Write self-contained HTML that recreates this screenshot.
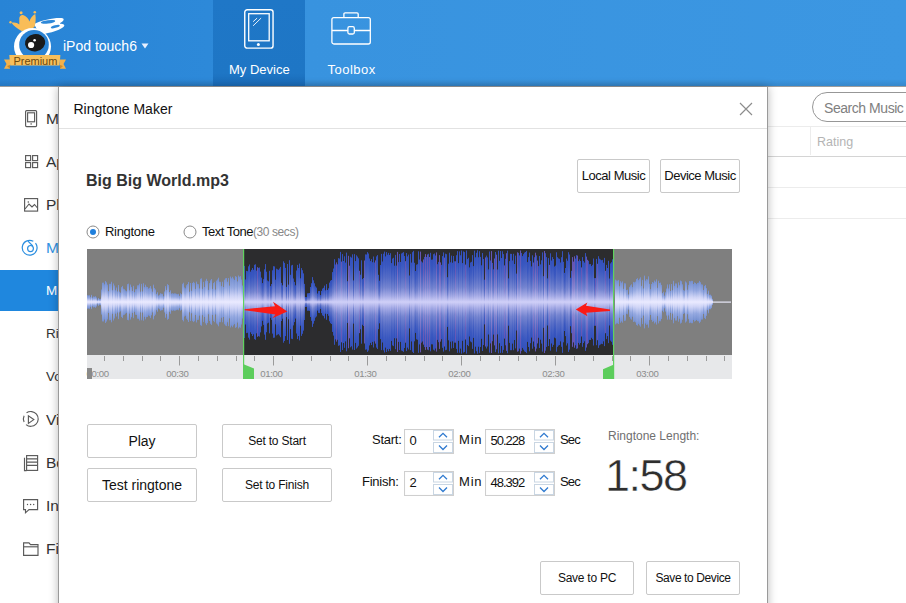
<!DOCTYPE html>
<html><head><meta charset="utf-8">
<style>
*{margin:0;padding:0;box-sizing:border-box}
html,body{width:906px;height:603px;overflow:hidden;background:#fff;font-family:"Liberation Sans",sans-serif;color:#222}
.a{position:absolute;white-space:nowrap}
#hdr{position:absolute;left:0;top:0;width:906px;height:87px;background:linear-gradient(to right,#2884d6 0%,#2d89d9 23%,#3893df 34%,#3c97e2 100%);border-bottom:1px solid #9c9c9c}
#hdr .shade{position:absolute;left:0;bottom:0;width:906px;height:7px;background:linear-gradient(to bottom,rgba(0,0,0,0),rgba(0,0,0,0.1))}
#tab{position:absolute;left:213px;top:0;width:92px;height:86px;background:linear-gradient(to bottom,#1f77c7 0%,#1e76c5 85%,#1a6bb8 100%)}
.wt{color:#fff}
.side{position:absolute;left:0;top:87px;width:70px;height:516px;background:#fff}
.sel{position:absolute;left:0;top:270px;width:70px;height:41px;background:#1f87de}
.st{position:absolute;left:46px;font-size:15.5px;color:#333}
.btn{position:absolute;border:1px solid #c9c9c9;border-radius:2px;background:#fff;font-size:13px;color:#111;text-align:center}
.lbl{position:absolute;font-size:13px;color:#111;white-space:nowrap}
.inp{position:absolute;border:1px solid #cfcfcf;background:#fff;font-size:13px;color:#111;box-shadow:inset 0 0 1px rgba(0,0,0,0.08)}
.spin{position:absolute;right:1px;top:1px;width:20px;bottom:1px}
</style></head><body>
<!-- header -->
<div id="hdr"><div class="shade"></div></div>
<div id="tab"></div>
<!-- logo -->
<svg class="a" style="left:0;top:0" width="80" height="80" viewBox="0 0 80 80">
  <path d="M34 24 C42 20 54 17.5 61.5 18 C64.5 18.3 64.5 20.5 61 22.5 C59.5 23.3 59.5 23.8 61 23.8 C65 24 65.5 26 62 28 C58 30.5 53 32 48 33 L40 35 Z" fill="#fff"/>
  <ellipse cx="48" cy="21.9" rx="7.3" ry="1.7" transform="rotate(-7 48 21.9)" fill="#2e88d8"/>
  <ellipse cx="55.3" cy="26.6" rx="4.6" ry="1.3" transform="rotate(-14 55.3 26.6)" fill="#2e88d8"/>
  <path d="M11.5 22.8 C14 22 17.5 22.5 19.3 24.5 L19.3 18 C19.8 15.5 21.5 14.5 23 15 C26 16 28.5 18.5 29.4 21.5 C30.5 18 32.5 15.5 35.3 14 C36 18 35.8 23 34.5 27 C31 29.5 26 31 21.5 31 C17 28.5 13.5 26 11.5 22.8 Z" fill="#f9bd58"/>
  <circle cx="21.1" cy="12.8" r="1.5" fill="#f9bd58"/><circle cx="34.8" cy="12.3" r="1.3" fill="#f9bd58"/><circle cx="10.5" cy="22.2" r="1.2" fill="#f9bd58"/>
  <circle cx="32.5" cy="46.5" r="18.5" fill="#fff"/>
  <circle cx="34" cy="44.8" r="14.8" fill="#2a82d2"/>
  <ellipse cx="35.1" cy="42.7" rx="10.2" ry="8.7" transform="rotate(-10 35.1 42.7)" fill="#1a1a1a"/>
  <circle cx="31.1" cy="45" r="3.1" fill="#fff"/><circle cx="34.6" cy="40.2" r="1.3" fill="#fff"/>
  <path d="M4 59.5 L10 59.5 L10 68.8 L4 68.8 L6.5 64 Z" fill="#f3b14b"/>
  <path d="M66 59.5 L60 59.5 L60 68.8 L66 68.8 L63.5 64 Z" fill="#f3b14b"/>
  <path d="M7 66 L10 68.8 L10 65 Z M63 66 L60 68.8 L60 65 Z" fill="#c98a2c"/>
  <path d="M9.3 55 L60.4 55 L59.5 65.5 L10.2 65.5 Z" fill="#f7bf5c"/>
  <text x="35.4" y="64.8" font-family="Liberation Sans" font-size="10" fill="#6e4a10" text-anchor="middle" textLength="44" lengthAdjust="spacingAndGlyphs">Premium</text>
</svg>
<div class="a wt" style="left:63px;top:37.5px;font-size:14px">iPod touch6</div>
<svg class="a" style="left:141px;top:43px" width="8" height="6"><path d="M0.5 0.5 L7.5 0.5 L4 5.5 Z" fill="#e8f0ff"/></svg>
<!-- my device icon -->
<svg class="a" style="left:243px;top:8px" width="32" height="42" viewBox="0 0 32 42">
  <rect x="1.75" y="1.75" width="28.3" height="38.4" rx="2.5" fill="none" stroke="#fff" stroke-width="1.4"/>
  <rect x="5.7" y="5.7" width="20.5" height="27.1" fill="none" stroke="#fff" stroke-width="1.3"/>
  <circle cx="15.4" cy="36.4" r="1.5" fill="#fff"/>
  <path d="M10.1 13.7 L14.1 10.1 M10.1 17.8 L18.1 10.1" stroke="#fff" stroke-width="0.9"/>
</svg>
<div class="a wt" style="left:229px;top:62px;font-size:13px">My Device</div>
<!-- toolbox icon -->
<svg class="a" style="left:330px;top:11px" width="42" height="34" viewBox="0 0 42 34">
  <rect x="1.9" y="6.6" width="38.4" height="26.4" rx="2" fill="none" stroke="#fff" stroke-width="1.3"/>
  <path d="M13.9 6.6 V3 Q13.9 1.8 15.1 1.8 H27 Q28.2 1.8 28.2 3 V6.6" fill="none" stroke="#fff" stroke-width="1.3"/>
  <path d="M1.9 19.5 H17.9 M24.3 19.5 H40.3" stroke="#fff" stroke-width="1.3"/>
  <rect x="17.9" y="15.7" width="6.4" height="7.3" rx="1.5" fill="none" stroke="#fff" stroke-width="1.3"/>
</svg>
<div class="a wt" style="left:327.5px;top:62px;font-size:13px;letter-spacing:0.5px">Toolbox</div>

<!-- sidebar -->
<div class="sel"></div>
<svg class="a" style="left:0;top:100px" width="46" height="470" viewBox="0 100 46 470" fill="none" stroke="#5a5a5a" stroke-width="1.15">
  <!-- phone -->
  <rect x="25.6" y="110.6" width="11" height="16" rx="1"/>
  <rect x="27.6" y="112.8" width="7" height="9"/>
  <rect x="30.5" y="123.3" width="1.3" height="1.3" fill="#555" stroke="none"/>
  <!-- apps -->
  <rect x="25.6" y="155.6" width="5" height="5"/><rect x="32.6" y="155.6" width="5" height="5"/>
  <rect x="25.6" y="162.6" width="5" height="5"/><rect x="32.6" y="162.6" width="5" height="5"/>
  <!-- photos -->
  <rect x="24.6" y="198.6" width="13" height="12.5"/>
  <path d="M25 209 L29 204 L32 207 L34.5 204.5 L37.5 208"/>
  <circle cx="28.3" cy="202" r="0.8" fill="#555" stroke="none"/>
  <!-- music (blue) -->
  <path d="M33.3 241.3 A7.4 7.4 0 1 0 35.5 243.2" stroke="#2b8ee0" stroke-width="1.2"/>
  <ellipse cx="30.5" cy="248.6" rx="2.9" ry="3.1" stroke="#2b8ee0" stroke-width="1.2"/>
  <path d="M28 241.2 L32.8 246" stroke="#2b8ee0" stroke-width="1.2"/>
  <!-- video -->
  <path d="M26.56 412.84 A7.4 7.4 0 1 1 26.04 424.57"/>
  <path d="M24.09 422.03 A7.4 7.4 0 0 1 24.09 415.77"/>
  <path d="M28.4 415.8 L28.4 423.4 L33.8 419.6 Z"/>
  <!-- books -->
  <rect x="26.6" y="455.6" width="11" height="14.8"/>
  <path d="M24.5 457.8 V470.6 H26.6"/>
  <path d="M27 458.8 H37 M27 462.1 H37 M27 465.4 H37"/>
  <!-- info/chat -->
  <path d="M23.6 499.6 H37.6 V509.6 H29 L25.5 512.8 V509.6 H23.6 Z"/>
  <circle cx="27.5" cy="504.5" r="0.7" fill="#555" stroke="none"/><circle cx="30.6" cy="504.5" r="0.7" fill="#555" stroke="none"/><circle cx="33.7" cy="504.5" r="0.7" fill="#555" stroke="none"/>
  <!-- folder -->
  <path d="M23.6 542.8 H29 L30.5 544.6 H38 V555.4 H23.6 Z"/>
  <path d="M23.6 546.8 H38"/>
</svg>
<div class="st" style="top:109.6px">M</div>
<div class="st" style="top:152.6px">Ap</div>
<div class="st" style="top:195.6px">Ph</div>
<div class="st" style="top:238.6px;color:#3293e4">M</div>
<div class="st" style="top:282.8px;color:#fff;font-size:13.5px">M</div>
<div class="st" style="top:325.6px;font-size:13.5px">Ri</div>
<div class="st" style="top:368.6px;font-size:13.5px">Vo</div>
<div class="st" style="top:410.6px">Vi</div>
<div class="st" style="top:453.6px">Bo</div>
<div class="st" style="top:496.6px">In</div>
<div class="st" style="top:539.6px">Fi</div>

<!-- right background -->
<div class="a" style="left:812px;top:92px;width:120px;height:30px;border:1px solid #979797;border-radius:15px"></div>
<div class="a" style="left:824px;top:100px;font-size:14px;color:#808080;letter-spacing:-0.45px">Search Music</div>
<div class="a" style="left:767px;top:126px;width:139px;height:1px;background:#ececec"></div>
<div class="a" style="left:810px;top:127px;width:1px;height:28px;background:#ececec"></div>
<div class="a" style="left:817px;top:134.5px;font-size:12.5px;color:#b4b4b4">Rating</div>
<div class="a" style="left:767px;top:156px;width:139px;height:1px;background:#d4d4d4"></div>
<div class="a" style="left:767px;top:187px;width:139px;height:1px;background:#ececec"></div>
<div class="a" style="left:767px;top:218px;width:139px;height:1px;background:#ececec"></div>

<!-- modal -->
<div class="a" style="left:58px;top:87px;width:710px;height:530px;background:#fff;border:1px solid #9a9a9a;border-top:none;box-shadow:0 0 9px rgba(0,0,0,0.28)"></div>
<div class="a" style="left:73.5px;top:101px;font-size:14px;color:#111">Ringtone Maker</div>
<svg class="a" style="left:737px;top:100px" width="18" height="18"><path d="M3 3 L15 15 M15 3 L3 15" stroke="#8c8c8c" stroke-width="1.15"/></svg>
<div class="a" style="left:59px;top:128px;width:708px;height:1px;background:#e2e2e2"></div>

<div class="a" style="left:86px;top:171.5px;font-size:16px;font-weight:bold;color:#333">Big Big World.mp3</div>
<div class="btn" style="left:577px;top:159px;width:73px;height:34px;line-height:32px;letter-spacing:-0.45px">Local Music</div>
<div class="btn" style="left:660px;top:159px;width:80px;height:34px;line-height:32px;letter-spacing:-0.5px">Device Music</div>

<!-- radios -->
<svg class="a" style="left:86px;top:225px" width="14" height="14"><circle cx="7" cy="7" r="6" fill="#fff" stroke="#8a8a8a"/><circle cx="7" cy="7" r="3" fill="#1f7fdc"/></svg>
<div class="lbl" style="left:105px;top:224px;letter-spacing:-0.3px">Ringtone</div>
<svg class="a" style="left:183px;top:225px" width="14" height="14"><circle cx="7" cy="7" r="6" fill="#fff" stroke="#8a8a8a"/></svg>
<div class="lbl" style="left:202px;top:224px;letter-spacing:-0.5px">Text Tone<span style="color:#888;font-size:12px;letter-spacing:-0.4px">(30 secs)</span></div>

<!-- waveform -->
<svg class="a" style="left:0;top:0" width="906" height="603">
<defs>
<linearGradient id="gd" x1="0" y1="0" x2="0" y2="1">
<stop offset="0" stop-color="#3250bc"/><stop offset="0.12" stop-color="#3a58c0"/><stop offset="0.25" stop-color="#556cc6"/><stop offset="0.35" stop-color="#7484d0"/><stop offset="0.43" stop-color="#a2a8e4"/><stop offset="0.5" stop-color="#d0d0f8"/><stop offset="0.57" stop-color="#a2a8e4"/><stop offset="0.65" stop-color="#7484d0"/><stop offset="0.75" stop-color="#556cc6"/><stop offset="0.88" stop-color="#3a58c0"/><stop offset="1" stop-color="#3250bc"/>
</linearGradient>
<linearGradient id="gp" x1="0" y1="0" x2="0" y2="1">
<stop offset="0" stop-color="#6454b4"/><stop offset="0.15" stop-color="#685cb8"/><stop offset="0.35" stop-color="#8a88d2"/><stop offset="0.5" stop-color="#d0d0f8"/><stop offset="0.65" stop-color="#8a88d2"/><stop offset="0.85" stop-color="#685cb8"/><stop offset="1" stop-color="#6454b4"/>
</linearGradient>
<linearGradient id="gl" x1="0" y1="0" x2="0" y2="1">
<stop offset="0" stop-color="#7590d0"/><stop offset="0.2" stop-color="#94a8e0"/><stop offset="0.38" stop-color="#cfd4f6"/><stop offset="0.5" stop-color="#eaeaff"/><stop offset="0.62" stop-color="#cfd4f6"/><stop offset="0.8" stop-color="#94a8e0"/><stop offset="1" stop-color="#7590d0"/>
</linearGradient>
</defs>
<rect x="87" y="249" width="645" height="106" fill="#7f7f7f"/>
<rect x="243" y="249" width="371" height="106" fill="#2c2c2e"/>
<g fill="url(#gl)"><rect x="87" y="295.2" width="1" height="13.5"/><rect x="88" y="295.4" width="1" height="13.2"/><rect x="89" y="295.2" width="1" height="13.6"/><rect x="90" y="297.1" width="1" height="9.8"/><rect x="91" y="294.8" width="1" height="14.3"/><rect x="92" y="297.6" width="1" height="8.9"/><rect x="93" y="296.4" width="1" height="11.1"/><rect x="94" y="296.7" width="1" height="10.5"/><rect x="95" y="296.2" width="1" height="11.6"/><rect x="96" y="297.4" width="1" height="9.2"/><rect x="97" y="299.5" width="1" height="5.0"/><rect x="98" y="298.0" width="1" height="7.9"/><rect x="99" y="299.1" width="1" height="5.7"/><rect x="100" y="298.8" width="1" height="6.4"/><rect x="101" y="289.5" width="1" height="25.1"/><rect x="102" y="282.7" width="1" height="38.7"/><rect x="103" y="282.6" width="1" height="38.9"/><rect x="104" y="284.3" width="1" height="35.3"/><rect x="105" y="281.0" width="1" height="42.0"/><rect x="106" y="282.3" width="1" height="39.3"/><rect x="107" y="284.6" width="1" height="34.9"/><rect x="108" y="291.1" width="1" height="21.9"/><rect x="109" y="283.8" width="1" height="36.5"/><rect x="110" y="283.8" width="1" height="36.3"/><rect x="111" y="281.7" width="1" height="40.6"/><rect x="112" y="290.2" width="1" height="23.6"/><rect x="113" y="283.4" width="1" height="37.1"/><rect x="114" y="285.5" width="1" height="33.0"/><rect x="115" y="290.3" width="1" height="23.4"/><rect x="116" y="287.5" width="1" height="29.1"/><rect x="117" y="291.4" width="1" height="21.2"/><rect x="118" y="285.0" width="1" height="34.1"/><rect x="119" y="291.6" width="1" height="20.8"/><rect x="120" y="292.6" width="1" height="18.8"/><rect x="121" y="287.1" width="1" height="29.9"/><rect x="122" y="285.9" width="1" height="32.2"/><rect x="123" y="288.7" width="1" height="26.5"/><rect x="124" y="289.2" width="1" height="25.6"/><rect x="125" y="290.4" width="1" height="23.3"/><rect x="126" y="291.2" width="1" height="21.7"/><rect x="127" y="284.1" width="1" height="35.9"/><rect x="128" y="283.6" width="1" height="36.7"/><rect x="129" y="290.3" width="1" height="23.4"/><rect x="130" y="284.5" width="1" height="35.0"/><rect x="131" y="286.9" width="1" height="30.3"/><rect x="132" y="291.0" width="1" height="21.9"/><rect x="133" y="285.8" width="1" height="32.4"/><rect x="134" y="292.1" width="1" height="19.8"/><rect x="135" y="289.2" width="1" height="25.6"/><rect x="136" y="289.1" width="1" height="25.9"/><rect x="137" y="285.3" width="1" height="33.4"/><rect x="138" y="285.2" width="1" height="33.7"/><rect x="139" y="283.6" width="1" height="36.9"/><rect x="140" y="291.6" width="1" height="20.8"/><rect x="141" y="283.8" width="1" height="36.5"/><rect x="142" y="291.4" width="1" height="21.2"/><rect x="143" y="283.2" width="1" height="37.5"/><rect x="144" y="287.1" width="1" height="29.8"/><rect x="145" y="284.7" width="1" height="34.7"/><rect x="146" y="286.7" width="1" height="30.5"/><rect x="147" y="287.0" width="1" height="30.0"/><rect x="148" y="288.5" width="1" height="27.0"/><rect x="149" y="287.8" width="1" height="28.4"/><rect x="150" y="286.0" width="1" height="32.1"/><rect x="151" y="288.6" width="1" height="26.7"/><rect x="152" y="291.6" width="1" height="20.8"/><rect x="153" y="284.6" width="1" height="34.8"/><rect x="154" y="288.0" width="1" height="28.1"/><rect x="155" y="289.4" width="1" height="25.3"/><rect x="156" y="293.9" width="1" height="16.3"/><rect x="157" y="292.2" width="1" height="19.6"/><rect x="158" y="295.5" width="1" height="13.0"/><rect x="159" y="294.7" width="1" height="14.6"/><rect x="160" y="293.2" width="1" height="17.6"/><rect x="161" y="293.7" width="1" height="16.6"/><rect x="162" y="293.8" width="1" height="16.4"/><rect x="163" y="296.2" width="1" height="11.6"/><rect x="164" y="291.4" width="1" height="21.1"/><rect x="165" y="286.1" width="1" height="31.7"/><rect x="166" y="289.9" width="1" height="24.2"/><rect x="167" y="284.1" width="1" height="35.7"/><rect x="168" y="285.0" width="1" height="34.0"/><rect x="169" y="292.0" width="1" height="19.9"/><rect x="170" y="290.3" width="1" height="23.5"/><rect x="171" y="293.6" width="1" height="16.8"/><rect x="172" y="293.2" width="1" height="17.7"/><rect x="173" y="293.6" width="1" height="16.8"/><rect x="174" y="293.3" width="1" height="17.5"/><rect x="175" y="293.4" width="1" height="17.2"/><rect x="176" y="293.8" width="1" height="16.3"/><rect x="177" y="294.2" width="1" height="15.6"/><rect x="178" y="293.8" width="1" height="16.5"/><rect x="179" y="295.8" width="1" height="12.5"/><rect x="180" y="293.2" width="1" height="17.5"/><rect x="181" y="294.2" width="1" height="15.6"/><rect x="182" y="283.8" width="1" height="36.3"/><rect x="183" y="282.7" width="1" height="38.7"/><rect x="184" y="287.4" width="1" height="29.2"/><rect x="185" y="288.3" width="1" height="27.5"/><rect x="186" y="285.2" width="1" height="33.6"/><rect x="187" y="284.0" width="1" height="36.1"/><rect x="188" y="282.0" width="1" height="40.0"/><rect x="189" y="291.7" width="1" height="20.6"/><rect x="190" y="283.0" width="1" height="38.0"/><rect x="191" y="290.7" width="1" height="22.6"/><rect x="192" y="283.0" width="1" height="38.1"/><rect x="193" y="281.8" width="1" height="40.3"/><rect x="194" y="282.8" width="1" height="38.4"/><rect x="195" y="288.9" width="1" height="26.1"/><rect x="196" y="281.6" width="1" height="40.9"/><rect x="197" y="283.9" width="1" height="36.1"/><rect x="198" y="284.2" width="1" height="35.6"/><rect x="199" y="288.4" width="1" height="27.3"/><rect x="200" y="278.8" width="1" height="46.4"/><rect x="201" y="278.3" width="1" height="47.5"/><rect x="202" y="288.8" width="1" height="26.4"/><rect x="203" y="281.8" width="1" height="40.3"/><rect x="204" y="287.0" width="1" height="30.0"/><rect x="205" y="280.7" width="1" height="42.7"/><rect x="206" y="278.8" width="1" height="46.3"/><rect x="207" y="280.9" width="1" height="42.2"/><rect x="208" y="289.8" width="1" height="24.5"/><rect x="209" y="283.1" width="1" height="37.9"/><rect x="210" y="280.3" width="1" height="43.5"/><rect x="211" y="279.0" width="1" height="45.9"/><rect x="212" y="288.9" width="1" height="26.1"/><rect x="213" y="283.0" width="1" height="38.0"/><rect x="214" y="281.8" width="1" height="40.4"/><rect x="215" y="289.5" width="1" height="25.0"/><rect x="216" y="280.6" width="1" height="42.9"/><rect x="217" y="279.4" width="1" height="45.2"/><rect x="218" y="277.7" width="1" height="48.6"/><rect x="219" y="281.7" width="1" height="40.5"/><rect x="220" y="281.8" width="1" height="40.4"/><rect x="221" y="286.1" width="1" height="31.7"/><rect x="222" y="281.7" width="1" height="40.6"/><rect x="223" y="287.0" width="1" height="30.0"/><rect x="224" y="279.7" width="1" height="44.6"/><rect x="225" y="278.3" width="1" height="47.3"/><rect x="226" y="278.0" width="1" height="48.1"/><rect x="227" y="281.7" width="1" height="40.6"/><rect x="228" y="278.0" width="1" height="48.1"/><rect x="229" y="285.6" width="1" height="32.8"/><rect x="230" y="276.5" width="1" height="51.0"/><rect x="231" y="278.3" width="1" height="47.4"/><rect x="232" y="276.8" width="1" height="50.4"/><rect x="233" y="278.5" width="1" height="46.9"/><rect x="234" y="279.9" width="1" height="44.2"/><rect x="235" y="276.1" width="1" height="51.8"/><rect x="236" y="276.8" width="1" height="50.4"/><rect x="237" y="281.4" width="1" height="41.2"/><rect x="238" y="275.5" width="1" height="53.0"/><rect x="239" y="276.7" width="1" height="50.6"/><rect x="240" y="276.1" width="1" height="51.7"/><rect x="241" y="279.5" width="1" height="45.0"/><rect x="242" y="285.5" width="1" height="33.0"/></g>
<g fill="url(#gd)"><rect x="244" y="265.9" width="1" height="72.1"/><rect x="245" y="279.5" width="1" height="45.0"/><rect x="246" y="270.9" width="1" height="62.2"/><rect x="247" y="271.2" width="1" height="61.6"/><rect x="248" y="266.3" width="1" height="71.4"/><rect x="249" y="264.5" width="1" height="75.1"/><rect x="250" y="271.6" width="1" height="60.7"/><rect x="251" y="269.9" width="1" height="64.1"/><rect x="252" y="268.0" width="1" height="68.0"/><rect x="253" y="269.8" width="1" height="64.5"/><rect x="254" y="264.8" width="1" height="74.3"/><rect x="255" y="264.3" width="1" height="75.5"/><rect x="256" y="270.6" width="1" height="62.7"/><rect x="258" y="267.9" width="1" height="68.2"/><rect x="259" y="267.5" width="1" height="69.1"/><rect x="260" y="271.6" width="1" height="60.8"/><rect x="261" y="277.6" width="1" height="48.8"/><rect x="262" y="283.1" width="1" height="37.7"/><rect x="263" y="279.2" width="1" height="45.7"/><rect x="264" y="269.3" width="1" height="65.3"/><rect x="265" y="264.1" width="1" height="75.7"/><rect x="266" y="271.7" width="1" height="60.5"/><rect x="267" y="280.5" width="1" height="42.9"/><rect x="268" y="281.3" width="1" height="41.4"/><rect x="269" y="270.8" width="1" height="62.5"/><rect x="270" y="286.1" width="1" height="31.7"/><rect x="271" y="284.0" width="1" height="35.9"/><rect x="272" y="270.3" width="1" height="63.3"/><rect x="273" y="266.2" width="1" height="71.6"/><rect x="274" y="266.4" width="1" height="71.2"/><rect x="275" y="279.7" width="1" height="44.6"/><rect x="276" y="268.7" width="1" height="66.7"/><rect x="277" y="269.3" width="1" height="65.4"/><rect x="278" y="269.8" width="1" height="64.4"/><rect x="279" y="268.5" width="1" height="67.0"/><rect x="280" y="266.9" width="1" height="70.3"/><rect x="281" y="282.9" width="1" height="38.1"/><rect x="282" y="285.3" width="1" height="33.4"/><rect x="283" y="261.3" width="1" height="81.4"/><rect x="284" y="262.9" width="1" height="78.1"/><rect x="285" y="267.9" width="1" height="68.2"/><rect x="286" y="286.9" width="1" height="30.2"/><rect x="287" y="264.0" width="1" height="76.0"/><rect x="288" y="284.6" width="1" height="34.7"/><rect x="289" y="260.2" width="1" height="83.6"/><rect x="290" y="274.8" width="1" height="54.3"/><rect x="291" y="265.4" width="1" height="73.3"/><rect x="292" y="264.9" width="1" height="74.2"/><rect x="293" y="278.5" width="1" height="46.9"/><rect x="294" y="281.9" width="1" height="40.2"/><rect x="295" y="285.3" width="1" height="33.3"/><rect x="296" y="270.5" width="1" height="63.0"/><rect x="297" y="264.9" width="1" height="74.2"/><rect x="298" y="268.0" width="1" height="68.0"/><rect x="299" y="263.6" width="1" height="76.8"/><rect x="300" y="278.3" width="1" height="47.4"/><rect x="301" y="268.1" width="1" height="67.8"/><rect x="302" y="270.2" width="1" height="63.6"/><rect x="303" y="273.4" width="1" height="57.2"/><rect x="304" y="283.9" width="1" height="36.1"/><rect x="305" y="297.0" width="1" height="10.0"/><rect x="306" y="297.1" width="1" height="9.8"/><rect x="307" y="293.3" width="1" height="17.5"/><rect x="308" y="293.2" width="1" height="17.5"/><rect x="309" y="293.0" width="1" height="17.9"/><rect x="310" y="287.0" width="1" height="30.0"/><rect x="311" y="283.2" width="1" height="37.6"/><rect x="312" y="277.1" width="1" height="49.8"/><rect x="313" y="280.3" width="1" height="43.4"/><rect x="314" y="283.3" width="1" height="37.5"/><rect x="315" y="286.4" width="1" height="31.2"/><rect x="316" y="287.6" width="1" height="28.9"/><rect x="317" y="293.5" width="1" height="17.1"/><rect x="318" y="291.1" width="1" height="21.8"/><rect x="319" y="291.0" width="1" height="22.1"/><rect x="320" y="295.1" width="1" height="13.8"/><rect x="321" y="290.9" width="1" height="22.2"/><rect x="322" y="288.6" width="1" height="26.8"/><rect x="323" y="287.8" width="1" height="28.3"/><rect x="324" y="285.6" width="1" height="32.8"/><rect x="325" y="290.3" width="1" height="23.4"/><rect x="326" y="284.1" width="1" height="35.7"/><rect x="327" y="290.0" width="1" height="24.0"/><rect x="328" y="288.3" width="1" height="27.5"/><rect x="329" y="282.6" width="1" height="38.7"/><rect x="330" y="280.7" width="1" height="42.5"/><rect x="331" y="280.0" width="1" height="44.0"/><rect x="332" y="272.1" width="1" height="59.8"/><rect x="333" y="268.5" width="1" height="67.1"/><rect x="334" y="259.2" width="1" height="85.6"/></g><g fill="url(#gp)"><rect x="257" y="267.2" width="1" height="69.6"/></g>
<g fill="url(#gd)"><rect x="335" y="264.5" width="1" height="74.9"/><rect x="337" y="264.3" width="1" height="75.5"/><rect x="338" y="258.1" width="1" height="87.7"/><rect x="339" y="258.6" width="1" height="86.7"/><rect x="340" y="251.9" width="1" height="100.1"/><rect x="342" y="254.1" width="1" height="95.9"/><rect x="343" y="261.0" width="1" height="82.0"/><rect x="344" y="256.3" width="1" height="91.5"/><rect x="345" y="262.6" width="1" height="78.8"/><rect x="346" y="252.6" width="1" height="98.7"/><rect x="347" y="281.2" width="1" height="41.7"/><rect x="350" y="256.7" width="1" height="90.6"/><rect x="351" y="257.6" width="1" height="88.7"/><rect x="352" y="254.3" width="1" height="95.3"/><rect x="353" y="280.4" width="1" height="43.2"/><rect x="354" y="254.1" width="1" height="95.9"/><rect x="355" y="261.1" width="1" height="81.8"/><rect x="356" y="255.3" width="1" height="93.3"/><rect x="357" y="256.6" width="1" height="90.8"/><rect x="358" y="258.3" width="1" height="87.5"/><rect x="360" y="274.7" width="1" height="54.5"/><rect x="361" y="260.3" width="1" height="83.4"/><rect x="362" y="279.1" width="1" height="45.7"/><rect x="363" y="278.0" width="1" height="48.0"/><rect x="365" y="254.4" width="1" height="95.3"/><rect x="366" y="254.5" width="1" height="94.9"/><rect x="367" y="252.1" width="1" height="99.8"/><rect x="368" y="253.5" width="1" height="97.0"/><rect x="369" y="258.5" width="1" height="86.9"/><rect x="370" y="261.1" width="1" height="81.8"/><rect x="371" y="259.1" width="1" height="85.9"/><rect x="372" y="262.2" width="1" height="79.7"/><rect x="373" y="256.5" width="1" height="91.0"/><rect x="374" y="262.5" width="1" height="78.9"/><rect x="376" y="256.4" width="1" height="91.2"/><rect x="377" y="255.1" width="1" height="93.9"/><rect x="378" y="274.8" width="1" height="54.4"/><rect x="379" y="280.7" width="1" height="42.6"/><rect x="380" y="265.0" width="1" height="74.1"/><rect x="381" y="253.9" width="1" height="96.2"/><rect x="382" y="261.5" width="1" height="81.0"/><rect x="383" y="253.7" width="1" height="96.6"/><rect x="384" y="251.6" width="1" height="100.9"/><rect x="385" y="256.4" width="1" height="91.2"/><rect x="386" y="252.1" width="1" height="99.9"/><rect x="387" y="254.7" width="1" height="94.5"/><rect x="388" y="252.9" width="1" height="98.3"/><rect x="389" y="255.0" width="1" height="93.9"/><rect x="390" y="253.2" width="1" height="97.7"/><rect x="391" y="263.1" width="1" height="77.8"/><rect x="392" y="258.6" width="1" height="86.8"/><rect x="393" y="257.8" width="1" height="88.3"/><rect x="394" y="265.7" width="1" height="72.5"/><rect x="395" y="254.9" width="1" height="94.3"/><rect x="396" y="265.6" width="1" height="72.8"/><rect x="398" y="262.1" width="1" height="79.8"/><rect x="399" y="254.0" width="1" height="96.0"/><rect x="400" y="262.0" width="1" height="79.9"/><rect x="401" y="253.5" width="1" height="97.0"/><rect x="402" y="252.8" width="1" height="98.3"/><rect x="403" y="252.1" width="1" height="99.8"/><rect x="404" y="256.0" width="1" height="92.0"/><rect x="406" y="253.0" width="1" height="98.1"/><rect x="407" y="256.4" width="1" height="91.2"/><rect x="408" y="254.6" width="1" height="94.8"/><rect x="409" y="275.5" width="1" height="52.9"/><rect x="410" y="253.9" width="1" height="96.2"/><rect x="411" y="262.6" width="1" height="78.8"/><rect x="412" y="252.2" width="1" height="99.6"/><rect x="413" y="250.9" width="1" height="102.1"/><rect x="414" y="262.8" width="1" height="78.5"/><rect x="415" y="271.0" width="1" height="61.9"/><rect x="416" y="264.7" width="1" height="74.6"/><rect x="417" y="264.2" width="1" height="75.6"/><rect x="418" y="251.3" width="1" height="101.5"/><rect x="419" y="259.5" width="1" height="84.9"/><rect x="421" y="261.4" width="1" height="81.3"/><rect x="422" y="262.5" width="1" height="79.0"/><rect x="424" y="256.9" width="1" height="90.2"/><rect x="426" y="257.0" width="1" height="90.0"/><rect x="428" y="253.8" width="1" height="96.4"/><rect x="430" y="252.8" width="1" height="98.5"/><rect x="431" y="259.7" width="1" height="84.6"/><rect x="432" y="259.5" width="1" height="84.9"/><rect x="433" y="254.2" width="1" height="95.5"/><rect x="434" y="253.5" width="1" height="97.0"/><rect x="435" y="255.5" width="1" height="93.0"/><rect x="437" y="264.2" width="1" height="75.7"/><rect x="438" y="261.9" width="1" height="80.3"/><rect x="441" y="264.9" width="1" height="74.3"/><rect x="442" y="256.1" width="1" height="91.7"/><rect x="443" y="252.4" width="1" height="99.2"/><rect x="445" y="253.7" width="1" height="96.5"/><rect x="446" y="254.2" width="1" height="95.6"/><rect x="447" y="277.2" width="1" height="49.7"/><rect x="448" y="263.7" width="1" height="76.6"/><rect x="449" y="252.7" width="1" height="98.6"/><rect x="450" y="262.3" width="1" height="79.4"/><rect x="451" y="255.6" width="1" height="92.9"/><rect x="452" y="262.7" width="1" height="78.6"/><rect x="453" y="256.0" width="1" height="92.0"/><rect x="454" y="261.3" width="1" height="81.3"/><rect x="456" y="255.2" width="1" height="93.7"/><rect x="457" y="251.1" width="1" height="101.7"/><rect x="458" y="263.1" width="1" height="77.8"/><rect x="459" y="251.4" width="1" height="101.3"/><rect x="460" y="255.3" width="1" height="93.3"/><rect x="461" y="250.5" width="1" height="103.1"/><rect x="462" y="263.1" width="1" height="77.7"/><rect x="463" y="251.4" width="1" height="101.2"/><rect x="464" y="252.1" width="1" height="99.8"/><rect x="466" y="250.5" width="1" height="103.1"/><rect x="467" y="259.1" width="1" height="85.9"/><rect x="468" y="257.8" width="1" height="88.3"/><rect x="469" y="267.4" width="1" height="69.1"/><rect x="470" y="262.5" width="1" height="79.0"/><rect x="471" y="261.8" width="1" height="80.5"/><rect x="472" y="255.1" width="1" height="93.8"/><rect x="473" y="266.1" width="1" height="71.8"/><rect x="474" y="250.7" width="1" height="102.7"/><rect x="475" y="257.3" width="1" height="89.4"/><rect x="476" y="252.8" width="1" height="98.4"/><rect x="477" y="250.3" width="1" height="103.4"/><rect x="478" y="257.3" width="1" height="89.4"/><rect x="479" y="251.2" width="1" height="101.7"/><rect x="480" y="256.9" width="1" height="90.1"/><rect x="481" y="265.3" width="1" height="73.5"/><rect x="482" y="253.0" width="1" height="98.0"/><rect x="483" y="259.0" width="1" height="86.0"/><rect x="484" y="279.7" width="1" height="44.7"/><rect x="486" y="255.6" width="1" height="92.9"/><rect x="487" y="257.4" width="1" height="89.1"/><rect x="488" y="269.4" width="1" height="65.1"/><rect x="489" y="251.5" width="1" height="101.1"/><rect x="490" y="260.5" width="1" height="82.9"/><rect x="492" y="262.9" width="1" height="78.3"/><rect x="493" y="269.3" width="1" height="65.3"/><rect x="495" y="252.0" width="1" height="100.1"/><rect x="497" y="269.5" width="1" height="64.9"/><rect x="498" y="250.7" width="1" height="102.6"/><rect x="499" y="260.8" width="1" height="82.4"/><rect x="500" y="251.0" width="1" height="101.9"/><rect x="501" y="258.0" width="1" height="88.0"/><rect x="502" y="251.3" width="1" height="101.5"/><rect x="503" y="254.1" width="1" height="95.8"/><rect x="505" y="258.8" width="1" height="86.5"/><rect x="507" y="250.7" width="1" height="102.5"/><rect x="508" y="278.4" width="1" height="47.3"/><rect x="509" y="261.1" width="1" height="81.8"/><rect x="510" y="253.8" width="1" height="96.4"/><rect x="511" y="253.9" width="1" height="96.3"/><rect x="512" y="260.5" width="1" height="83.1"/><rect x="513" y="253.8" width="1" height="96.4"/><rect x="514" y="264.0" width="1" height="76.0"/><rect x="515" y="255.6" width="1" height="92.8"/><rect x="516" y="273.6" width="1" height="56.9"/><rect x="518" y="252.9" width="1" height="98.3"/><rect x="519" y="255.4" width="1" height="93.2"/><rect x="521" y="253.0" width="1" height="98.1"/><rect x="522" y="256.1" width="1" height="91.8"/><rect x="523" y="254.2" width="1" height="95.5"/><rect x="524" y="252.7" width="1" height="98.7"/><rect x="525" y="252.0" width="1" height="100.0"/><rect x="526" y="250.9" width="1" height="102.2"/><rect x="527" y="262.1" width="1" height="79.8"/><rect x="528" y="257.1" width="1" height="89.9"/><rect x="529" y="252.6" width="1" height="98.7"/><rect x="530" y="260.9" width="1" height="82.3"/><rect x="531" y="266.4" width="1" height="71.2"/><rect x="532" y="255.3" width="1" height="93.4"/><rect x="534" y="257.2" width="1" height="89.5"/><rect x="536" y="255.4" width="1" height="93.2"/><rect x="538" y="266.1" width="1" height="71.7"/><rect x="539" y="256.0" width="1" height="92.0"/><rect x="540" y="264.4" width="1" height="75.3"/><rect x="541" y="260.3" width="1" height="83.3"/><rect x="542" y="252.4" width="1" height="99.2"/><rect x="543" y="276.2" width="1" height="51.6"/><rect x="545" y="253.2" width="1" height="97.5"/><rect x="546" y="257.1" width="1" height="89.8"/><rect x="547" y="278.4" width="1" height="47.1"/><rect x="548" y="258.1" width="1" height="87.9"/><rect x="550" y="253.3" width="1" height="97.4"/><rect x="551" y="260.5" width="1" height="83.0"/><rect x="552" y="257.1" width="1" height="89.8"/><rect x="553" y="259.0" width="1" height="85.9"/><rect x="554" y="266.5" width="1" height="71.1"/><rect x="555" y="265.6" width="1" height="72.7"/><rect x="556" y="252.3" width="1" height="99.4"/><rect x="557" y="257.2" width="1" height="89.7"/><rect x="558" y="258.4" width="1" height="87.2"/><rect x="559" y="258.9" width="1" height="86.1"/><rect x="560" y="262.5" width="1" height="78.9"/><rect x="561" y="257.2" width="1" height="89.6"/><rect x="562" y="251.2" width="1" height="101.6"/><rect x="563" y="261.8" width="1" height="80.5"/><rect x="564" y="272.9" width="1" height="58.1"/><rect x="565" y="268.0" width="1" height="68.1"/><rect x="566" y="258.6" width="1" height="86.9"/><rect x="567" y="260.7" width="1" height="82.6"/><rect x="568" y="252.2" width="1" height="99.7"/><rect x="569" y="254.5" width="1" height="95.1"/><rect x="570" y="277.8" width="1" height="48.4"/><rect x="571" y="270.8" width="1" height="62.4"/><rect x="575" y="258.6" width="1" height="86.7"/><rect x="576" y="255.1" width="1" height="93.8"/><rect x="578" y="261.1" width="1" height="81.8"/><rect x="579" y="259.4" width="1" height="85.2"/><rect x="580" y="261.0" width="1" height="82.0"/><rect x="582" y="257.1" width="1" height="89.7"/><rect x="583" y="261.1" width="1" height="81.9"/><rect x="584" y="262.6" width="1" height="78.7"/><rect x="585" y="253.1" width="1" height="97.8"/><rect x="588" y="260.8" width="1" height="82.3"/><rect x="589" y="264.2" width="1" height="75.7"/><rect x="590" y="264.0" width="1" height="76.0"/><rect x="591" y="266.1" width="1" height="71.7"/><rect x="592" y="264.8" width="1" height="74.4"/><rect x="593" y="258.5" width="1" height="87.0"/><rect x="594" y="278.1" width="1" height="47.7"/><rect x="596" y="258.9" width="1" height="86.3"/><rect x="598" y="256.2" width="1" height="91.7"/><rect x="599" y="258.7" width="1" height="86.6"/><rect x="600" y="259.5" width="1" height="85.0"/><rect x="601" y="260.2" width="1" height="83.6"/><rect x="602" y="259.9" width="1" height="84.2"/><rect x="603" y="262.7" width="1" height="78.6"/><rect x="604" y="257.9" width="1" height="88.2"/><rect x="606" y="264.9" width="1" height="74.2"/><rect x="607" y="268.0" width="1" height="68.1"/><rect x="608" y="260.8" width="1" height="82.3"/><rect x="609" y="278.5" width="1" height="47.0"/><rect x="610" y="263.4" width="1" height="77.2"/><rect x="611" y="262.2" width="1" height="79.6"/><rect x="612" y="259.3" width="1" height="85.5"/></g><g fill="url(#gp)"><rect x="336" y="262.4" width="1" height="79.2"/><rect x="341" y="261.6" width="1" height="80.7"/><rect x="348" y="255.8" width="1" height="92.4"/><rect x="349" y="265.7" width="1" height="72.6"/><rect x="359" y="270.8" width="1" height="62.3"/><rect x="364" y="260.5" width="1" height="83.0"/><rect x="375" y="260.4" width="1" height="83.2"/><rect x="397" y="251.9" width="1" height="100.1"/><rect x="405" y="261.2" width="1" height="81.5"/><rect x="420" y="251.6" width="1" height="100.7"/><rect x="423" y="259.4" width="1" height="85.2"/><rect x="425" y="254.1" width="1" height="95.8"/><rect x="427" y="254.5" width="1" height="95.1"/><rect x="429" y="257.0" width="1" height="90.0"/><rect x="436" y="252.4" width="1" height="99.2"/><rect x="439" y="255.1" width="1" height="93.8"/><rect x="440" y="262.4" width="1" height="79.2"/><rect x="444" y="257.6" width="1" height="88.9"/><rect x="455" y="261.3" width="1" height="81.4"/><rect x="465" y="264.6" width="1" height="74.9"/><rect x="485" y="257.4" width="1" height="89.1"/><rect x="491" y="251.1" width="1" height="101.9"/><rect x="494" y="258.5" width="1" height="86.9"/><rect x="496" y="254.7" width="1" height="94.6"/><rect x="504" y="265.4" width="1" height="73.2"/><rect x="506" y="253.2" width="1" height="97.7"/><rect x="517" y="252.3" width="1" height="99.4"/><rect x="520" y="250.5" width="1" height="103.1"/><rect x="533" y="262.5" width="1" height="79.0"/><rect x="535" y="252.7" width="1" height="98.7"/><rect x="537" y="260.6" width="1" height="82.8"/><rect x="544" y="251.0" width="1" height="102.0"/><rect x="549" y="264.9" width="1" height="74.2"/><rect x="572" y="257.1" width="1" height="89.7"/><rect x="573" y="261.6" width="1" height="80.8"/><rect x="574" y="256.3" width="1" height="91.4"/><rect x="577" y="255.6" width="1" height="92.8"/><rect x="581" y="267.4" width="1" height="69.1"/><rect x="586" y="256.6" width="1" height="90.9"/><rect x="587" y="259.8" width="1" height="84.4"/><rect x="595" y="278.1" width="1" height="47.7"/><rect x="597" y="263.8" width="1" height="76.4"/><rect x="605" y="270.8" width="1" height="62.4"/></g>
<g fill="url(#gl)"><rect x="615" y="279.6" width="1" height="44.8"/><rect x="616" y="280.4" width="1" height="43.1"/><rect x="617" y="280.6" width="1" height="42.8"/><rect x="618" y="279.9" width="1" height="44.2"/><rect x="619" y="286.2" width="1" height="31.6"/><rect x="620" y="281.2" width="1" height="41.6"/><rect x="621" y="282.6" width="1" height="38.8"/><rect x="622" y="281.4" width="1" height="41.3"/><rect x="623" y="288.8" width="1" height="26.4"/><rect x="624" y="283.2" width="1" height="37.7"/><rect x="625" y="283.4" width="1" height="37.2"/><rect x="626" y="290.0" width="1" height="23.9"/><rect x="627" y="289.5" width="1" height="24.9"/><rect x="628" y="294.4" width="1" height="15.3"/><rect x="629" y="286.9" width="1" height="30.1"/><rect x="630" y="285.3" width="1" height="33.4"/><rect x="631" y="284.3" width="1" height="35.4"/><rect x="632" y="287.1" width="1" height="29.7"/><rect x="633" y="281.9" width="1" height="40.1"/><rect x="634" y="282.3" width="1" height="39.3"/><rect x="635" y="281.6" width="1" height="40.8"/><rect x="636" y="279.0" width="1" height="46.0"/><rect x="637" y="278.2" width="1" height="47.5"/><rect x="638" y="280.1" width="1" height="43.8"/><rect x="639" y="278.7" width="1" height="46.7"/><rect x="640" y="277.3" width="1" height="49.4"/><rect x="641" y="285.9" width="1" height="32.2"/><rect x="642" y="279.9" width="1" height="44.2"/><rect x="643" y="288.4" width="1" height="27.2"/><rect x="644" y="275.6" width="1" height="52.8"/><rect x="645" y="280.6" width="1" height="42.9"/><rect x="646" y="279.1" width="1" height="45.8"/><rect x="647" y="279.5" width="1" height="45.1"/><rect x="648" y="276.3" width="1" height="51.4"/><rect x="649" y="283.8" width="1" height="36.4"/><rect x="650" y="289.1" width="1" height="25.9"/><rect x="651" y="284.0" width="1" height="36.0"/><rect x="652" y="282.0" width="1" height="39.9"/><rect x="653" y="282.7" width="1" height="38.5"/><rect x="654" y="280.5" width="1" height="43.0"/><rect x="655" y="281.6" width="1" height="40.7"/><rect x="656" y="279.3" width="1" height="45.3"/><rect x="657" y="287.8" width="1" height="28.4"/><rect x="658" y="280.7" width="1" height="42.7"/><rect x="659" y="283.0" width="1" height="38.1"/><rect x="660" y="282.6" width="1" height="38.7"/><rect x="661" y="284.9" width="1" height="34.1"/><rect x="662" y="293.1" width="1" height="17.7"/><rect x="663" y="291.7" width="1" height="20.6"/><rect x="664" y="295.5" width="1" height="12.9"/><rect x="665" y="292.3" width="1" height="19.3"/><rect x="666" y="288.5" width="1" height="27.1"/><rect x="667" y="284.4" width="1" height="35.3"/><rect x="668" y="288.4" width="1" height="27.1"/><rect x="669" y="284.3" width="1" height="35.3"/><rect x="670" y="291.0" width="1" height="21.9"/><rect x="671" y="284.0" width="1" height="35.9"/><rect x="672" y="290.2" width="1" height="23.5"/><rect x="673" y="280.8" width="1" height="42.5"/><rect x="674" y="285.8" width="1" height="32.4"/><rect x="675" y="283.4" width="1" height="37.2"/><rect x="676" y="283.5" width="1" height="37.1"/><rect x="677" y="287.7" width="1" height="28.5"/><rect x="678" y="282.3" width="1" height="39.4"/><rect x="679" y="285.2" width="1" height="33.6"/><rect x="680" y="280.5" width="1" height="43.1"/><rect x="681" y="281.2" width="1" height="41.6"/><rect x="682" y="284.3" width="1" height="35.5"/><rect x="683" y="290.1" width="1" height="23.9"/><rect x="684" y="290.6" width="1" height="22.7"/><rect x="685" y="281.4" width="1" height="41.2"/><rect x="686" y="282.5" width="1" height="39.0"/><rect x="687" y="289.7" width="1" height="24.6"/><rect x="688" y="284.9" width="1" height="34.3"/><rect x="689" y="281.0" width="1" height="42.1"/><rect x="690" y="281.3" width="1" height="41.4"/><rect x="691" y="280.8" width="1" height="42.4"/><rect x="692" y="280.9" width="1" height="42.3"/><rect x="693" y="284.0" width="1" height="36.0"/><rect x="694" y="282.4" width="1" height="39.2"/><rect x="695" y="283.0" width="1" height="37.9"/><rect x="696" y="284.1" width="1" height="35.9"/><rect x="697" y="282.9" width="1" height="38.2"/><rect x="698" y="282.6" width="1" height="38.8"/><rect x="699" y="280.9" width="1" height="42.2"/><rect x="700" y="282.2" width="1" height="39.6"/><rect x="701" y="284.3" width="1" height="35.3"/><rect x="702" y="284.6" width="1" height="34.9"/><rect x="703" y="290.0" width="1" height="24.0"/><rect x="704" y="285.9" width="1" height="32.2"/><rect x="705" y="284.9" width="1" height="34.2"/><rect x="706" y="288.1" width="1" height="27.8"/><rect x="707" y="293.9" width="1" height="16.3"/><rect x="708" y="290.6" width="1" height="22.7"/><rect x="709" y="294.8" width="1" height="14.3"/><rect x="710" y="294.6" width="1" height="14.7"/><rect x="711" y="295.7" width="1" height="12.5"/><rect x="712" y="298.9" width="1" height="6.1"/></g>
<rect x="712" y="301.5" width="19" height="1.2" fill="#e8e8f8"/>
<rect x="87" y="355" width="645" height="24" fill="#e7e8ea"/>
<g stroke="#9a9a9a" stroke-width="1"><line x1="104.5" y1="356" x2="104.5" y2="361.0"/><line x1="123.5" y1="356" x2="123.5" y2="361.0"/><line x1="142.5" y1="356" x2="142.5" y2="361.0"/><line x1="160.5" y1="356" x2="160.5" y2="361.0"/><line x1="179.5" y1="356" x2="179.5" y2="365.5"/><line x1="198.5" y1="356" x2="198.5" y2="361.0"/><line x1="217.5" y1="356" x2="217.5" y2="361.0"/><line x1="236.5" y1="356" x2="236.5" y2="361.0"/><line x1="254.5" y1="356" x2="254.5" y2="361.0"/><line x1="273.5" y1="356" x2="273.5" y2="365.5"/><line x1="292.5" y1="356" x2="292.5" y2="361.0"/><line x1="311.5" y1="356" x2="311.5" y2="361.0"/><line x1="330.5" y1="356" x2="330.5" y2="361.0"/><line x1="348.5" y1="356" x2="348.5" y2="361.0"/><line x1="367.5" y1="356" x2="367.5" y2="365.5"/><line x1="386.5" y1="356" x2="386.5" y2="361.0"/><line x1="405.5" y1="356" x2="405.5" y2="361.0"/><line x1="424.5" y1="356" x2="424.5" y2="361.0"/><line x1="442.5" y1="356" x2="442.5" y2="361.0"/><line x1="461.5" y1="356" x2="461.5" y2="365.5"/><line x1="480.5" y1="356" x2="480.5" y2="361.0"/><line x1="499.5" y1="356" x2="499.5" y2="361.0"/><line x1="518.5" y1="356" x2="518.5" y2="361.0"/><line x1="536.5" y1="356" x2="536.5" y2="361.0"/><line x1="555.5" y1="356" x2="555.5" y2="365.5"/><line x1="574.5" y1="356" x2="574.5" y2="361.0"/><line x1="593.5" y1="356" x2="593.5" y2="361.0"/><line x1="612.5" y1="356" x2="612.5" y2="361.0"/><line x1="630.5" y1="356" x2="630.5" y2="361.0"/><line x1="649.5" y1="356" x2="649.5" y2="365.5"/><line x1="668.5" y1="356" x2="668.5" y2="361.0"/><line x1="687.5" y1="356" x2="687.5" y2="361.0"/><line x1="706.5" y1="356" x2="706.5" y2="361.0"/><line x1="724.5" y1="356" x2="724.5" y2="361.0"/></g>
<g font-family="Liberation Sans" font-size="9.6" fill="#8c8c8c" letter-spacing="-0.35">
<text x="86.5" y="376.5">00:00</text>
<text x="166.3" y="376.5">00:30</text>
<text x="260.3" y="376.5">01:00</text>
<text x="354.3" y="376.5">01:30</text>
<text x="448.3" y="376.5">02:00</text>
<text x="542.3" y="376.5">02:30</text>
<text x="636.3" y="376.5">03:00</text>
</g>
<rect x="87" y="368" width="5" height="11" fill="#8a8a8a"/>
<rect x="243" y="249" width="1.2" height="130" fill="#5ed35e"/>
<rect x="613" y="249" width="1.2" height="130" fill="#5ed35e"/>
<path d="M243 364 L254 368.5 L254 379 L243 379 Z" fill="#5ccd5c"/>
<path d="M603 369.3 L614 364.6 L614 379 L603 379 Z" fill="#5ccd5c"/>
<path d="M244.6 309.2 L275 306.3 L273 301.8 L287.3 311.4 L272.3 318.3 L275.5 314.4 L244.6 310.2 Z" fill="#fa1a16"/>
<path d="M575.8 309.4 L587.4 302.6 L586 305.7 L610 309.6 L610 310.9 L586.2 312.7 L587.4 316.2 Z" fill="#fa1a16"/>
</svg>

<!-- controls -->
<div class="btn" style="left:87px;top:424px;width:110px;height:34px;line-height:32px;font-size:14px">Play</div>
<div class="btn" style="left:87px;top:468px;width:110px;height:34px;line-height:32px;font-size:14px">Test ringtone</div>
<div class="btn" style="left:222px;top:424px;width:110px;height:34px;line-height:32px;font-size:12px;letter-spacing:-0.2px">Set to Start</div>
<div class="btn" style="left:222px;top:468px;width:110px;height:34px;line-height:32px;font-size:12px;letter-spacing:-0.2px">Set to Finish</div>

<div class="lbl" style="left:372px;top:431.5px;letter-spacing:-0.25px">Start:</div>
<div class="lbl" style="left:362px;top:473.5px;letter-spacing:-0.25px">Finish:</div>
<div class="inp" style="left:404px;top:429px;width:50px;height:25px"><span class="a" style="left:4.5px;top:2.5px;letter-spacing:-0.6px">0</span><svg width="21" height="23" style="position:absolute;left:28px;top:0"><rect x="0.5" y="0.5" width="19" height="9.5" fill="#fff" stroke="#c9d6e3"/><rect x="0.5" y="12.5" width="19" height="10" fill="#fff" stroke="#c9d6e3"/><path d="M6 7.3 L10 3.3 L14 7.3" fill="none" stroke="#2f7ad0" stroke-width="1.3"/><path d="M6 15.5 L10 19.5 L14 15.5" fill="none" stroke="#2f7ad0" stroke-width="1.3"/></svg></div>
<div class="inp" style="left:485px;top:429px;width:70px;height:25px"><span class="a" style="left:4.5px;top:2.5px;letter-spacing:-1px">50.228</span><svg width="21" height="23" style="position:absolute;left:48px;top:0"><rect x="0.5" y="0.5" width="19" height="9.5" fill="#fff" stroke="#c9d6e3"/><rect x="0.5" y="12.5" width="19" height="10" fill="#fff" stroke="#c9d6e3"/><path d="M6 7.3 L10 3.3 L14 7.3" fill="none" stroke="#2f7ad0" stroke-width="1.3"/><path d="M6 15.5 L10 19.5 L14 15.5" fill="none" stroke="#2f7ad0" stroke-width="1.3"/></svg></div>
<div class="inp" style="left:404px;top:471px;width:50px;height:25px"><span class="a" style="left:4.5px;top:2.5px;letter-spacing:-0.6px">2</span><svg width="21" height="23" style="position:absolute;left:28px;top:0"><rect x="0.5" y="0.5" width="19" height="9.5" fill="#fff" stroke="#c9d6e3"/><rect x="0.5" y="12.5" width="19" height="10" fill="#fff" stroke="#c9d6e3"/><path d="M6 7.3 L10 3.3 L14 7.3" fill="none" stroke="#2f7ad0" stroke-width="1.3"/><path d="M6 15.5 L10 19.5 L14 15.5" fill="none" stroke="#2f7ad0" stroke-width="1.3"/></svg></div>
<div class="inp" style="left:485px;top:471px;width:70px;height:25px"><span class="a" style="left:4.5px;top:2.5px;letter-spacing:-1px">48.392</span><svg width="21" height="23" style="position:absolute;left:48px;top:0"><rect x="0.5" y="0.5" width="19" height="9.5" fill="#fff" stroke="#c9d6e3"/><rect x="0.5" y="12.5" width="19" height="10" fill="#fff" stroke="#c9d6e3"/><path d="M6 7.3 L10 3.3 L14 7.3" fill="none" stroke="#2f7ad0" stroke-width="1.3"/><path d="M6 15.5 L10 19.5 L14 15.5" fill="none" stroke="#2f7ad0" stroke-width="1.3"/></svg></div>
<div class="lbl" style="left:459px;top:431.5px;letter-spacing:0.8px">Min</div>
<div class="lbl" style="left:459px;top:473.5px;letter-spacing:0.8px">Min</div>
<div class="lbl" style="left:560px;top:431.5px;letter-spacing:-0.8px">Sec</div>
<div class="lbl" style="left:560px;top:473.5px;letter-spacing:-0.8px">Sec</div>

<div class="a" style="left:608px;top:429px;font-size:12px;color:#707070">Ringtone Length:</div>
<div class="a" style="left:605px;top:450px;font-size:45px;color:#2e2e2e;letter-spacing:-1.5px;-webkit-text-stroke:0.5px #fff">1:58</div>

<div class="btn" style="left:540px;top:561px;width:94px;height:34px;line-height:32px;font-size:12px;letter-spacing:-0.25px">Save to PC</div>
<div class="btn" style="left:646px;top:561px;width:94px;height:34px;line-height:32px;font-size:12px;letter-spacing:-0.4px">Save to Device</div>
</body></html>
